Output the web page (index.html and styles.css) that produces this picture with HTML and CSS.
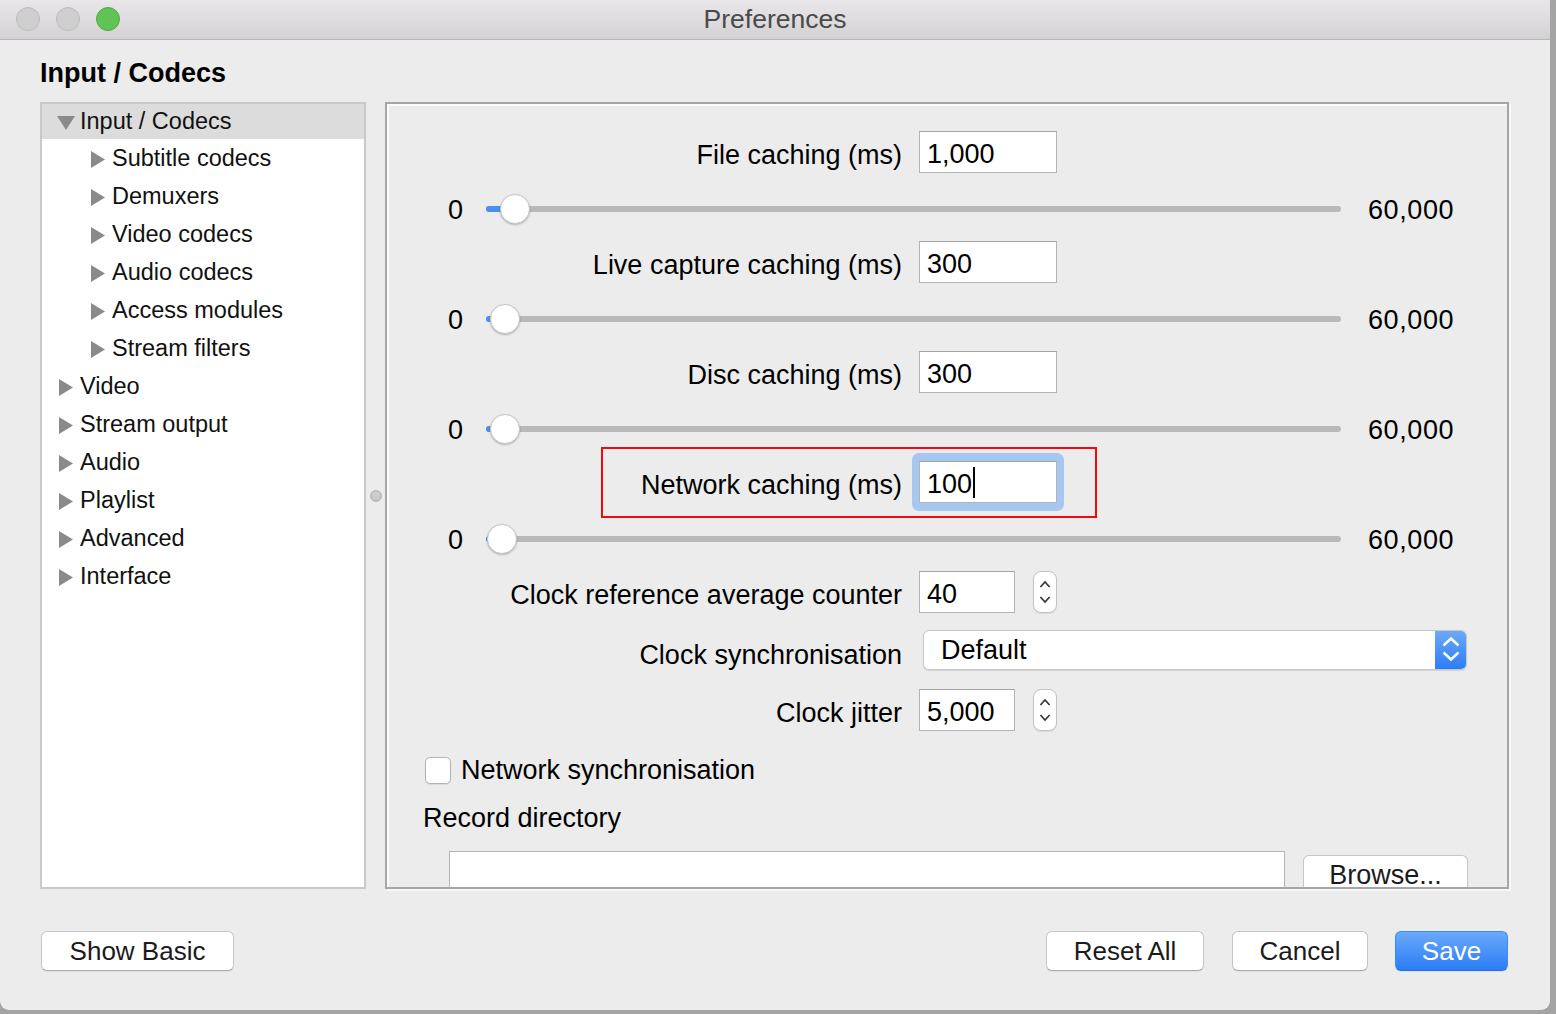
FILE: index.html
```html
<!DOCTYPE html>
<html>
<head>
<meta charset="utf-8">
<title>Preferences</title>
<link rel="stylesheet" href="styles.css">
</head>
<body>
<div class="window">
  <div class="titlebar">
    <div class="lights">
      <span class="light"></span>
      <span class="light"></span>
      <span class="light green"></span>
    </div>
    <div class="title">Preferences</div>
    <div></div>
  </div>
  <div class="content">
    <h1 class="heading">Input / Codecs</h1>
    <div class="main">
      <div class="tree">
        <div class="row first selected">
          <svg class="arrow-down" width="18" height="14" viewBox="0 0 18 14"><polygon points="0,0 18,0 9,14" fill="#8a8a8a"/></svg>
          <span>Input / Codecs</span>
        </div>
        <div class="row child"><svg class="arrow-right" width="14" height="17" viewBox="0 0 14 17"><polygon points="0,0 14,8.5 0,17" fill="#8a8a8a"/></svg><span>Subtitle codecs</span></div>
        <div class="row child"><svg class="arrow-right" width="14" height="17" viewBox="0 0 14 17"><polygon points="0,0 14,8.5 0,17" fill="#8a8a8a"/></svg><span>Demuxers</span></div>
        <div class="row child"><svg class="arrow-right" width="14" height="17" viewBox="0 0 14 17"><polygon points="0,0 14,8.5 0,17" fill="#8a8a8a"/></svg><span>Video codecs</span></div>
        <div class="row child"><svg class="arrow-right" width="14" height="17" viewBox="0 0 14 17"><polygon points="0,0 14,8.5 0,17" fill="#8a8a8a"/></svg><span>Audio codecs</span></div>
        <div class="row child"><svg class="arrow-right" width="14" height="17" viewBox="0 0 14 17"><polygon points="0,0 14,8.5 0,17" fill="#8a8a8a"/></svg><span>Access modules</span></div>
        <div class="row child"><svg class="arrow-right" width="14" height="17" viewBox="0 0 14 17"><polygon points="0,0 14,8.5 0,17" fill="#8a8a8a"/></svg><span>Stream filters</span></div>
        <div class="row top"><svg class="arrow-right" width="14" height="17" viewBox="0 0 14 17"><polygon points="0,0 14,8.5 0,17" fill="#8a8a8a"/></svg><span>Video</span></div>
        <div class="row top"><svg class="arrow-right" width="14" height="17" viewBox="0 0 14 17"><polygon points="0,0 14,8.5 0,17" fill="#8a8a8a"/></svg><span>Stream output</span></div>
        <div class="row top"><svg class="arrow-right" width="14" height="17" viewBox="0 0 14 17"><polygon points="0,0 14,8.5 0,17" fill="#8a8a8a"/></svg><span>Audio</span></div>
        <div class="row top"><svg class="arrow-right" width="14" height="17" viewBox="0 0 14 17"><polygon points="0,0 14,8.5 0,17" fill="#8a8a8a"/></svg><span>Playlist</span></div>
        <div class="row top"><svg class="arrow-right" width="14" height="17" viewBox="0 0 14 17"><polygon points="0,0 14,8.5 0,17" fill="#8a8a8a"/></svg><span>Advanced</span></div>
        <div class="row top"><svg class="arrow-right" width="14" height="17" viewBox="0 0 14 17"><polygon points="0,0 14,8.5 0,17" fill="#8a8a8a"/></svg><span>Interface</span></div>
      </div>
      <div class="splitter"><span class="handle"></span></div>
      <div class="panel">
        <div class="panel-inner">
          <div class="form-row">
            <div class="label">File caching (ms)</div>
            <div class="field">1,000</div>
          </div>
          <div class="slider-row">
            <div class="smin">0</div>
            <div class="track">
              <div class="fill" style="width: 29px"></div>
              <div class="knob" style="left: 14px"></div>
            </div>
            <div class="smax">60,000</div>
          </div>

          <div class="form-row">
            <div class="label">Live capture caching (ms)</div>
            <div class="field">300</div>
          </div>
          <div class="slider-row">
            <div class="smin">0</div>
            <div class="track">
              <div class="fill" style="width: 19px"></div>
              <div class="knob" style="left: 4px"></div>
            </div>
            <div class="smax">60,000</div>
          </div>

          <div class="form-row">
            <div class="label">Disc caching (ms)</div>
            <div class="field">300</div>
          </div>
          <div class="slider-row">
            <div class="smin">0</div>
            <div class="track">
              <div class="fill" style="width: 19px"></div>
              <div class="knob" style="left: 4px"></div>
            </div>
            <div class="smax">60,000</div>
          </div>

          <div class="form-row">
            <div class="label">Network caching (ms)</div>
            <div class="focus-ring"><div class="field">100<span class="caret"></span></div></div>
          </div>
          <div class="slider-row">
            <div class="smin">0</div>
            <div class="track">
              <div class="fill" style="width: 16px"></div>
              <div class="knob" style="left: 1px"></div>
            </div>
            <div class="smax">60,000</div>
          </div>

          <div class="form-row">
            <div class="label">Clock reference average counter</div>
            <div class="field small">40</div>
            <div class="stepper">
              <svg width="24" height="42" viewBox="0 0 24 42"><polyline points="7,15.5 12,10 17,15.5" fill="none" stroke="#333" stroke-width="1.8"/><polyline points="7,26.5 12,32 17,26.5" fill="none" stroke="#333" stroke-width="1.8"/></svg>
            </div>
          </div>

          <div class="form-row combo-row">
            <div class="label">Clock synchronisation</div>
            <div class="combo">
              <span class="combo-text">Default</span>
              <span class="combo-btn">
                <svg width="32" height="40" viewBox="0 0 32 40"><polyline points="8.5,16.5 16,9.5 23.5,16.5" fill="none" stroke="#fff" stroke-width="2.4"/><polyline points="8.5,23.5 16,30.5 23.5,23.5" fill="none" stroke="#fff" stroke-width="2.4"/></svg>
              </span>
            </div>
          </div>

          <div class="form-row jitter-row">
            <div class="label">Clock jitter</div>
            <div class="field small">5,000</div>
            <div class="stepper">
              <svg width="24" height="42" viewBox="0 0 24 42"><polyline points="7,15.5 12,10 17,15.5" fill="none" stroke="#333" stroke-width="1.8"/><polyline points="7,26.5 12,32 17,26.5" fill="none" stroke="#333" stroke-width="1.8"/></svg>
            </div>
          </div>

          <div class="check-row">
            <span class="checkbox"></span>
            <span>Network synchronisation</span>
          </div>

          <div class="section-label">Record directory</div>

          <div class="dir-row">
            <div class="dir-field"></div>
            <div class="btn browse">Browse...</div>
          </div>
        </div>
      </div>
    </div>
    <div class="footer">
      <div class="btn show-basic">Show Basic</div>
      <div class="spacer"></div>
      <div class="btn reset">Reset All</div>
      <div class="btn cancel">Cancel</div>
      <div class="btn save">Save</div>
    </div>
  </div>
  <div class="annot"></div>
</div>
</body>
</html>
```

FILE: styles.css
```css
html, body {
  margin: 0;
  padding: 0;
}
body {
  background: #a4a4a4;
  font-family: "Liberation Sans", Arial, sans-serif;
  color: #000;
  width: 1556px;
  height: 1014px;
  overflow: hidden;
}
.window {
  position: relative;
  width: 1550px;
  height: 1010px;
  background: #ececec;
  border-radius: 0 0 9px 9px;
  display: flex;
  flex-direction: column;
  overflow: hidden;
}
.titlebar {
  height: 39px;
  border-bottom: 1px solid #b8b6b8;
  background: linear-gradient(#e9e7e9, #d3d1d3);
  display: grid;
  grid-template-columns: 1fr auto 1fr;
  align-items: center;
}
.lights {
  display: flex;
  gap: 16px;
  padding-left: 16px;
  padding-bottom: 2px;
}
.light {
  width: 22px;
  height: 22px;
  border-radius: 50%;
  background: #d0cfd0;
  border: 1px solid #bdbcbd;
}
.light.green {
  background: #5fc453;
  border-color: #4faa41;
}
.title {
  font-size: 26.5px;
  color: #4a4a4a;
}
.content {
  flex: 1;
  display: flex;
  flex-direction: column;
  padding: 16px 41px 0 40px;
}
.heading {
  margin: 0;
  font-size: 27px;
  font-weight: 700;
  line-height: 34px;
  height: 34px;
}
.main {
  margin-top: 12px;
  display: flex;
  height: 787px;
}
.tree {
  width: 326px;
  box-sizing: border-box;
  border: 2px solid #c9c9c9;
  background: #fff;
  font-size: 23.5px;
}
.row {
  height: 38px;
  display: flex;
  align-items: center;
  color: #111;
}
.row.first {
  height: 35px;
  padding-left: 15px;
}
.row.selected {
  background: #dcdcdc;
}
.row.top {
  padding-left: 17px;
}
.row.child {
  padding-left: 49px;
}
.arrow-down {
  margin-right: 5px;
  margin-top: 2px;
}
.arrow-right {
  margin-right: 7px;
  margin-top: 2px;
}
.splitter {
  width: 19px;
  display: flex;
  align-items: center;
  justify-content: center;
}
.handle {
  width: 10px;
  height: 10px;
  border-radius: 50%;
  background: radial-gradient(circle at 50% 40%, #d2d2d2, #bcbcbc);
  border: 1px solid #b4b4b4;
}
.panel {
  width: 1124px;
  box-sizing: border-box;
  border: 2px solid #a6a6a6;
  box-shadow: inset 2px 2px 0 #fbfbfb, 2px 2px 0 #f7f7f7;
  overflow: hidden;
  background: #ececec;
}
.panel-inner {
  padding-top: 27px;
  font-size: 27px;
}
.form-row {
  display: flex;
  align-items: center;
  height: 42px;
}
.label {
  width: 515px;
  text-align: right;
  margin-right: 17px;
  padding-top: 6px;
  white-space: nowrap;
}
.field {
  width: 138px;
  height: 42px;
  box-sizing: border-box;
  background: #fff;
  border: 1px solid #b4b4b4;
  border-top-color: #a3a3a3;
  padding-left: 7px;
  display: flex;
  align-items: center;
  padding-top: 4px;
}
.field.small {
  width: 96px;
}
.focus-ring {
  margin: -8px -7px;
  padding: 8px 7px;
  background: #a6c7ef;
  border-radius: 7px;
}
.caret {
  display: inline-block;
  width: 2px;
  height: 31px;
  background: #000;
  margin-left: 1px;
  margin-top: -3px;
}
.stepper {
  margin-left: 18px;
  width: 24px;
  height: 42px;
  box-sizing: border-box;
  background: #fff;
  border: 1px solid #c3c3c3;
  border-radius: 8px;
  box-shadow: 0 1px 1px rgba(0,0,0,0.08);
  display: flex;
  align-items: center;
  justify-content: center;
}
.stepper svg {
  display: block;
}
.slider-row {
  display: flex;
  align-items: center;
  height: 30px;
  margin: 21px 0 17px;
  padding-left: 61px;
}
.smin {
  width: 38px;
  padding-top: 3px;
}
.track {
  position: relative;
  width: 855px;
  height: 30px;
}
.track::before {
  content: "";
  position: absolute;
  left: 0;
  right: 0;
  top: 12px;
  height: 6px;
  border-radius: 3px;
  background: #b9b9b9;
}
.fill {
  position: absolute;
  left: 0;
  top: 12px;
  height: 6px;
  border-radius: 3px;
  background: #4a90ee;
}
.knob {
  position: absolute;
  top: 0;
  width: 30px;
  height: 30px;
  box-sizing: border-box;
  border-radius: 50%;
  background: #fff;
  border: 1px solid #c6c6c6;
  box-shadow: 0 1px 2px rgba(0,0,0,0.25);
}
.smax {
  margin-left: 27px;
  padding-top: 3px;
  letter-spacing: 0.6px;
}
.combo-row {
  margin-top: 17px;
  height: 40px;
}
.combo-row .label {
  padding-top: 10px;
}
.combo {
  margin-left: 4px;
  width: 544px;
  height: 40px;
  box-sizing: border-box;
  background: #fff;
  border: 1px solid #c6c6c6;
  border-radius: 6px;
  box-shadow: 0 1px 1px rgba(0,0,0,0.1);
  display: flex;
  align-items: center;
  justify-content: space-between;
  overflow: hidden;
}
.combo-text {
  padding-left: 17px;
  padding-top: 1px;
}
.combo-btn {
  width: 32px;
  height: 40px;
  margin-right: -1px;
  background: linear-gradient(#6eaaf8, #2b7cf5);
  display: flex;
}
.combo-btn svg {
  display: block;
  margin-top: -1px;
}
.jitter-row {
  margin-top: 19px;
}
.check-row {
  margin-top: 24px;
  height: 30px;
  display: flex;
  align-items: center;
  padding-left: 38px;
}
.checkbox {
  width: 26px;
  height: 27px;
  box-sizing: border-box;
  background: #fff;
  border: 1px solid #b3b3b3;
  border-radius: 5px;
  box-shadow: 0 1px 1px rgba(0,0,0,0.08);
  margin-right: 10px;
}
.section-label {
  margin-top: 18px;
  height: 30px;
  line-height: 30px;
  padding-left: 36px;
}
.dir-row {
  margin-top: 18px;
  display: flex;
  align-items: flex-start;
  padding-left: 62px;
}
.dir-field {
  width: 836px;
  height: 44px;
  box-sizing: border-box;
  background: #fff;
  border: 1px solid #b4b4b4;
}
.btn {
  height: 40px;
  box-sizing: border-box;
  background: #fff;
  border: 1px solid #c6c6c6;
  border-bottom-color: #ababab;
  border-radius: 6px;
  box-shadow: 0 1px 1px rgba(0,0,0,0.06);
  font-size: 26px;
  color: #1b1b1b;
  display: flex;
  align-items: center;
  justify-content: center;
  padding-top: 1px;
}
.browse {
  margin-left: 18px;
  margin-top: 4px;
  width: 165px;
  font-size: 27px;
}
.footer {
  margin-top: 42px;
  display: flex;
  align-items: center;
}
.show-basic {
  margin-left: 1px;
  width: 193px;
}
.spacer {
  flex: 1;
}
.reset {
  width: 158px;
  margin-right: 28px;
}
.cancel {
  width: 136px;
  margin-right: 27px;
}
.save {
  width: 113px;
  margin-right: 1px;
  background: linear-gradient(#6aaaf9, #2a7cf6);
  border-color: #3f8af2;
  border-bottom-color: #2a6fe0;
  color: #fff;
}
.annot {
  position: absolute;
  left: 601px;
  top: 447px;
  width: 496px;
  height: 71px;
  box-sizing: border-box;
  border: 2px solid #f20a0a;
}
```
